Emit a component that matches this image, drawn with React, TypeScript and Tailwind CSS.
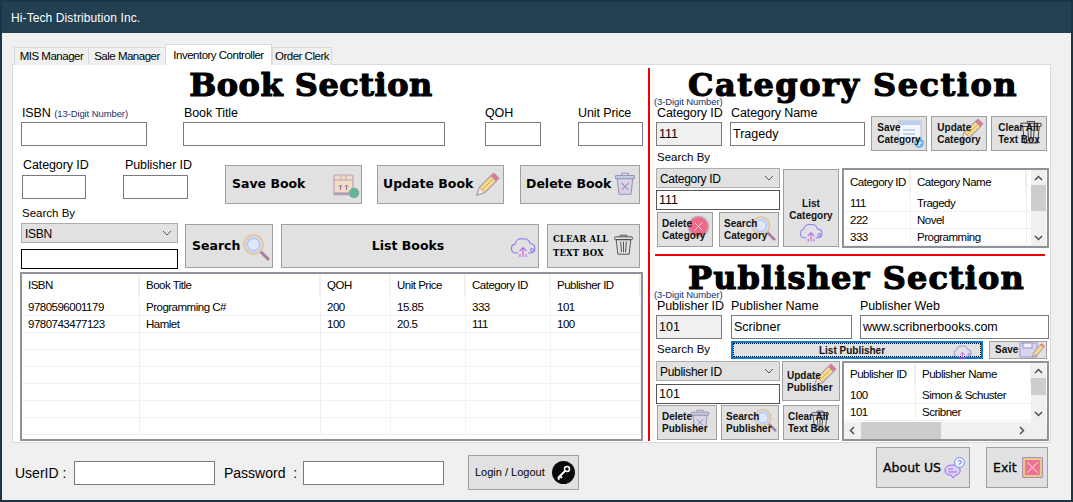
import type { ReactNode } from "react";

const heading =
  "font-['DejaVu_Serif',serif] font-bold text-black [-webkit-text-stroke:1.2px_black] leading-[20px] whitespace-nowrap text-[32px]";
const bigBtn = "font-['DejaVu_Sans',sans-serif] font-bold text-[12.5px] text-black";
const smallBtn = "font-['Liberation_Sans',sans-serif] font-bold text-[10px] leading-[12px] text-[#111] whitespace-nowrap";
const plainBtn = "font-['DejaVu_Sans',sans-serif] text-[12.5px] pt-[1px] text-black [-webkit-text-stroke:0.3px_black]";

function Btn({
  className,
  textClass,
  icon,
  children,
}: {
  className: string;
  textClass?: string;
  icon?: ReactNode;
  children: ReactNode;
}) {
  return (
    <div className={`relative box-border shrink-0 flex items-center bg-[#e1e1e1] border border-[#a0a0a0] ${className}`}>
      {icon}
      <span className={`relative z-10 ${textClass ?? bigBtn}`}>{children}</span>
    </div>
  );
}

function Input({ value, className }: { value?: string; className: string }) {
  return (
    <div className={`box-border flex items-center px-[2px] text-[12.5px] text-black border ${className}`}>
      {value}
    </div>
  );
}

function Combo({ value, className }: { value: string; className: string }) {
  return (
    <div className={`box-border h-[20px] flex items-center justify-between pl-[3px] pr-[5px] bg-[#e1e1e1] border border-[#adadad] text-[12px] tracking-[-0.3px] text-black ${className}`}>
      <span className="pt-[1px]">{value}</span>
      <svg width="10" height="6" viewBox="0 0 10 6" fill="none" stroke="#555" strokeWidth="1">
        <path d="M1 1l4 4 4-4" />
      </svg>
    </div>
  );
}

function Hint() {
  return <div className="h-[9px] leading-[10px] -ml-[2px] text-[9.5px] tracking-[-0.1px] text-[#1b2f6b] whitespace-nowrap">(3-Digit Number)</div>;
}

function Label({ children, className }: { children: ReactNode; className?: string }) {
  return <div className={`h-[15px] leading-[15px] text-[12.5px] tracking-[-0.1px] text-black whitespace-nowrap ${className ?? ""}`}>{children}</div>;
}

function Field({
  label,
  className,
  value,
  labelClass,
}: {
  label: ReactNode;
  className: string;
  value?: string;
  labelClass?: string;
}) {
  return (
    <div className={`flex flex-col shrink-0 ${className}`}>
      <Label className={labelClass}>{label}</Label>
      <Input value={value} className="w-full h-[24px] bg-white border-[#7a7a7a]" />
    </div>
  );
}

/* icons */
function BoxIcon() {
  return (
    <svg className="absolute right-[1px] top-[8px]" width="29" height="27" viewBox="0 0 29 27" fill="none">
      <path d="M3 3q0-2 2-2h15q2 0 2 2v18H3z" fill="#f2dcc4" stroke="#b9a3c4" strokeWidth="1.200" />
      <path d="M3 6h19M10 1v5M15 1v5" stroke="#b9a3c4" />
      <path d="M3.500 19.500h18" stroke="#a793b0" strokeWidth="2" />
      <path d="M9.500 16v-5M8 12.500L9.500 11l1.500 1.500M15.500 16v-5M14 12.500l1.500-1.500 1.500 1.500" stroke="#8a7094" />
      <circle cx="23" cy="19" r="5" fill="#5fb79a" stroke="#8fa8a8" strokeWidth="0.600" />
    </svg>
  );
}

function Pencil({ className, size = 25 }: { className: string; size?: number }) {
  return (
    <svg className={`absolute ${className}`} width={size} height={size} viewBox="0 0 28 28" fill="none">
      <path d="M2 26l3-9L18 4l6 6-13 13z" fill="#f5d98a" stroke="#a793b0" strokeWidth="1.200" />
      <path d="M2 26l3-9 6 6z" fill="#f7e7cf" stroke="#a793b0" />
      <path d="M18 4l3-3 6 6-3 3z" fill="#e8768a" stroke="#a793b0" />
      <path d="M8 20L20 8" stroke="#d9a34f" />
    </svg>
  );
}

function TrashX({ className, size = 24 }: { className: string; size?: number }) {
  return (
    <svg className={`absolute ${className}`} width={size} height={size} viewBox="0 0 28 28" fill="none" stroke="#a08fb5" strokeWidth="1.200">
      <path d="M10 4V1.500h8V4" />
      <rect x="3" y="4" width="22" height="4" rx="1" fill="#bcd0e4" />
      <path d="M5 8l2 18h14l2-18z" fill="#d8d4e6" />
      <path d="M10 13l8 8M18 13l-8 8" stroke="#8b8fb8" />
    </svg>
  );
}

function TrashPlain({ className, size = 21 }: { className: string; size?: number }) {
  return (
    <svg className={`absolute ${className}`} width={size} height={size} viewBox="0 0 26 26" fill="none" stroke="#444" strokeWidth="1.100">
      <path d="M9 3V1.500h8V3" />
      <rect x="2" y="3.500" width="22" height="3.500" rx="1" />
      <path d="M4 7l2 18h14l2-18zM9.500 9.500l1 13M13 9.500v13M16.500 9.500l-1 13" />
    </svg>
  );
}

function Cloud({ className, size = 26 }: { className: string; size?: number }) {
  return (
    <svg className={`absolute ${className}`} width={size} height={size * 0.85} viewBox="0 0 26 22" fill="none" stroke="#9a6cf0" strokeWidth="1.100">
      <path d="M8 17H6a4.500 4.500 0 0 1-1-8.900A6 6 0 0 1 13 3a5.500 5.500 0 0 1 7 4.500 4.800 4.800 0 0 1 1 9.500h-3" stroke="#8f7cf5" />
      <path d="M13 21v-9M9.500 15l3.500-3.500 3.500 3.500" stroke="#c05cf0" />
      <path d="M10 21v-3M16 21v-3" stroke="#c05cf0" />
      <circle cx="22" cy="14" r="1.500" stroke="#8f7cf5" />
    </svg>
  );
}

function Magnifier({ className, size = 28 }: { className: string; size?: number }) {
  return (
    <svg className={`absolute ${className}`} width={size} height={size} viewBox="0 0 28 28" fill="none">
      <path d="M17 17l9 9" stroke="#a77f9d" strokeWidth="3" strokeLinecap="round" />
      <circle cx="11.500" cy="11.500" r="9.500" fill="#c9dcf7" stroke="#e6c79a" strokeWidth="2" />
      <circle cx="11.500" cy="11.500" r="6" fill="#dfe8fb" stroke="#a9b8ea" />
    </svg>
  );
}

function RedCircle() {
  return (
    <svg className="absolute left-[29px] top-[2px]" width="23" height="23" viewBox="0 0 23 23" fill="none">
      <circle cx="11.500" cy="11.500" r="10" fill="#ec6b86" stroke="#caa7b8" strokeWidth="1.500" />
      <path d="M7.500 7.500l8 8M15.500 7.500l-8 8" stroke="#f8d0d8" />
    </svg>
  );
}

function NoteIcon() {
  return (
    <svg className="absolute left-[26px] top-[3px]" width="27" height="30" viewBox="0 0 27 30" fill="none">
      <rect x="1" y="1" width="22" height="23" fill="#f4f6fb" stroke="#b9c4dc" />
      <rect x="1" y="1" width="22" height="4" fill="#bcd3f0" />
      <path d="M5 10h12M5 14h12M5 18h8" stroke="#8fb0e0" />
      <circle cx="21" cy="23" r="5" fill="#6fb4ea" />
      <path d="M21 20v6M18 23h6" stroke="#fff" />
    </svg>
  );
}

function FloppyIcon() {
  return (
    <svg className="absolute right-[1px] top-[0px]" width="26" height="16" viewBox="0 0 26 16" fill="none">
      <rect x="1" y="1" width="17" height="14" fill="#d6d3ee" stroke="#9f97c9" />
      <rect x="4" y="1" width="9" height="5" fill="#eef" stroke="#9f97c9" />
      <path d="M13 15l2-5 7-8 3 3-7 8z" fill="#f5d98a" stroke="#a793b0" />
      <path d="M22 2l3 3" stroke="#e8768a" strokeWidth="2" />
    </svg>
  );
}

function KeyIcon() {
  return (
    <svg className="absolute right-[3px] top-[5px]" width="23" height="23" viewBox="0 0 23 23" fill="none">
      <circle cx="11.500" cy="11.500" r="11.500" fill="#0a0a0a" />
      <circle cx="15" cy="8" r="2.500" stroke="#fff" strokeWidth="1.600" />
      <path d="M13 10l-7 7M8 15l2 2M6 17l1.500 1.500" stroke="#fff" strokeWidth="1.800" />
    </svg>
  );
}

function ChatIcon() {
  return (
    <svg className="absolute right-[4px] top-[9px]" width="22" height="22" viewBox="0 0 22 22" fill="none">
      <path d="M2 14q0-6 7-6t8 4q1 5-4 6l-3 3-2-3q-6 0-6-4z" fill="#ddd0fb" stroke="#a06cf0" />
      <path d="M5 12h5M5 15h9" stroke="#a06cf0" />
      <circle cx="16.500" cy="5.500" r="5" fill="#eaf2fd" stroke="#6f8fe8" />
      <path d="M15 4.200q1.500-1.700 3 0t-1.500 2.500v.8" stroke="#4a62c8" strokeWidth="0.800" />
    </svg>
  );
}

function ExitIcon() {
  return (
    <svg className="absolute right-[4px] top-[9px]" width="21" height="21" viewBox="0 0 20 20" fill="none">
      <rect x="0.500" y="0.500" width="19" height="19" rx="1" fill="#e9c88f" stroke="#a793b0" />
      <rect x="3" y="3" width="14" height="14" fill="#ee6f8e" />
      <path d="M5 5l10 10M15 5L5 15" stroke="#fbd9df" />
    </svg>
  );
}

/* data grids */
function Grid({
  className,
  cols,
  headers,
  rows,
  lines,
  headerH,
  rowH,
  side,
  bottom,
}: {
  className: string;
  cols: string;
  headers: string[];
  rows: string[][];
  lines: number;
  headerH: string;
  rowH: string;
  side?: ReactNode;
  bottom?: ReactNode;
}) {
  const blanks = Array.from({ length: lines - rows.length }, () => headers.map(() => ""));
  const cell = "flex items-center pl-[6px] text-[11.5px] tracking-[-0.5px] text-black whitespace-nowrap overflow-hidden";
  return (
    <div className={`box-border shrink-0 border-2 border-[#8f9399] bg-white overflow-hidden flex flex-col ${className}`}>
      <div className="flex flex-1 min-h-0">
        <div className="flex-1 min-w-0 overflow-hidden">
          <div className={`grid ${cols} ${headerH}`}>
            {headers.map((h) => (
              <div key={h} className={`${cell} border-r-2 border-[#f0f0f0]`}>
                {h}
              </div>
            ))}
          </div>
          {[...rows, ...blanks].map((row, i) => (
            <div key={i} className={`grid ${cols} ${rowH} border-b border-[#f0f0f0]`}>
              {row.map((c, j) => (
                <div key={j} className={`${cell} pt-[2px] border-r border-[#f0f0f0]`}>
                  {c}
                </div>
              ))}
            </div>
          ))}
        </div>
        {side}
      </div>
      {bottom}
    </div>
  );
}

function VScroll({ thumb }: { thumb: string }) {
  return (
    <div className="w-[15px] mr-[1px] shrink-0 bg-[#f0f0f0] flex flex-col items-center">
      <svg className="mt-[5px] mb-[4px]" width="9" height="6" viewBox="0 0 9 6" fill="none" stroke="#505050" strokeWidth="1.500">
        <path d="M1 5l3.500-3.500L8 5" />
      </svg>
      <div className={`w-full bg-[#cdcdcd] ${thumb}`} />
      <svg className="mt-auto mb-[5px]" width="9" height="6" viewBox="0 0 9 6" fill="none" stroke="#505050" strokeWidth="1.500">
        <path d="M1 1l3.500 3.500L8 1" />
      </svg>
    </div>
  );
}

function HScroll() {
  return (
    <div className="h-[17px] shrink-0 bg-[#f0f0f0] flex items-center pl-[5px] pr-[22px]">
      <svg width="6" height="9" viewBox="0 0 6 9" fill="none" stroke="#505050" strokeWidth="1.500">
        <path d="M5 1L1.500 4.500 5 8" />
      </svg>
      <div className="ml-[6px] w-[80px] h-full bg-[#cdcdcd]" />
      <svg className="ml-auto" width="6" height="9" viewBox="0 0 6 9" fill="none" stroke="#505050" strokeWidth="1.500">
        <path d="M1 1l3.500 3.500L1 8" />
      </svg>
    </div>
  );
}

function Tabs() {
  const tab =
    "box-border h-[18px] flex items-center justify-center border border-b-0 border-[#d9d9d9] bg-[#f0f0f0] text-[11.5px] tracking-[-0.5px] text-black whitespace-nowrap";
  return (
    <div className="flex items-end h-[21px] ml-[12px] mt-[11px] relative z-10 -mb-[1px]">
      <div className={`${tab} w-[75px]`}>MIS Manager</div>
      <div className={`${tab} w-[78px] -ml-[1px]`}>Sale Manager</div>
      <div className="box-border h-[21px] w-[107px] -ml-[1px] flex items-start justify-center pt-[2px] border border-b-0 border-[#d9d9d9] bg-white text-[11.5px] tracking-[-0.5px] text-black whitespace-nowrap">
        Inventory Controller
      </div>
      <div className={`${tab} w-[60px]`}>Order Clerk</div>
    </div>
  );
}

function BookSection() {
  return (
    <div className="w-[635px] shrink-0">
      <div className={`${heading} h-[35px] pt-[10px] text-center pr-[39px] tracking-[0.5px]`}>Book Section</div>
      <div className="flex items-end h-[46px] pl-[8px]">
        <Field
          className="w-[126px]"
          labelClass="pl-[1px] mb-[1px]"
          label={
            <>
              ISBN <span className="text-[9.5px] text-[#1b2f6b]">(13-Digit Number)</span>
            </>
          }
        />
        <Field className="w-[262px] ml-[36px]" labelClass="pl-[1px] mb-[1px]" label="Book Title" />
        <Field className="w-[56px] ml-[40px]" labelClass="mb-[1px]" label="QOH" />
        <Field className="w-[65px] ml-[37px]" labelClass="mb-[1px]" label="Unit Price" />
      </div>
      <div className="flex h-[58px] pl-[9px]">
        <Field className="w-[64px] mt-[12px]" labelClass="pl-[1px] mb-[2px]" label="Category ID" />
        <Field className="w-[65px] ml-[37px] mt-[12px]" labelClass="pl-[2px] mb-[2px]" label="Publisher ID" />
        <Btn className="w-[137px] h-[39px] ml-[37px] mt-[19px] pl-[6px]" icon={<BoxIcon />}>
          Save Book
        </Btn>
        <Btn className="w-[127px] h-[39px] ml-[15px] mt-[19px] pl-[5px]" icon={<Pencil className="right-[3px] top-[6px]" />}>
          Update Book
        </Btn>
        <Btn className="w-[120px] h-[39px] ml-[16px] mt-[19px] pl-[5px]" icon={<TrashX className="right-[2px] top-[6px]" />}>
          Delete Book
        </Btn>
      </div>
      <div className="flex h-[68px] pl-[8px]">
        <div className="w-[157px] shrink-0 pt-[2px]">
          <div className="h-[17px] leading-[14px] text-[11.5px] text-black pl-[1px]">Search By</div>
          <Combo value="ISBN" className="w-full" />
          <Input className="w-full h-[20px] mt-[6px] bg-white border-black" />
        </div>
        <Btn className="w-[88px] h-[44px] ml-[7px] mt-[20px] pl-[6px]" icon={<Magnifier className="right-[2px] top-[8px]" />}>
          Search
        </Btn>
        <Btn className="w-[258px] h-[44px] ml-[8px] mt-[20px] justify-center pr-[4px]" icon={<Cloud className="right-[2px] top-[11px]" />}>
          List Books
        </Btn>
        <Btn
          className="w-[93px] h-[44px] ml-[8px] mt-[20px] pl-[5px]"
          textClass="font-['DejaVu_Serif',serif] font-bold text-[8.5px] leading-[14px] tracking-[0.1px] text-black whitespace-nowrap"
          icon={<TrashPlain className="right-[5px] top-[9px]" />}
        >
          CLEAR ALL
          <br />
          TEXT BOX
        </Btn>
      </div>
      <Grid
        className="w-[623px] h-[169px] ml-[7px]"
        cols="grid-cols-[118px_181px_70px_75px_85px_90px]"
        headers={["ISBN", "Book Title", "QOH", "Unit Price", "Category ID", "Publisher ID"]}
        rows={[
          ["9780596001179", "Programming C#", "200", "15.85", "333", "101"],
          ["9780743477123", "Hamlet", "100", "20.5", "111", "100"],
        ]}
        lines={8}
        headerH="h-[25px] pb-[2px]"
        rowH="h-[17px]"
      />
    </div>
  );
}

function CategorySection() {
  return (
    <>
      <div className={`${heading} h-[32px] pt-[10px] text-center pl-[6px] tracking-[1.5px]`}>Category Section</div>
      <div className="flex h-[54px] pl-[6px]">
        <div className="w-[66px] shrink-0">
          <Hint />
          <Label className="pl-[1px] mb-[1px]">Category ID</Label>
          <Input value="111" className="w-full h-[24px] bg-[#f0f0f0] border-[#7a7a7a]" />
        </div>
        <Field className="w-[135px] ml-[8px] mt-[9px]" labelClass="pl-[1px] mb-[1px]" label="Category Name" value="Tragedy" />
        <Btn className="w-[56px] h-[35px] ml-[6px] mt-[19px] justify-center" textClass={smallBtn} icon={<NoteIcon />}>
          Save
          <br />
          Category
        </Btn>
        <Btn className="w-[56px] h-[35px] ml-[4px] mt-[19px] justify-center" textClass={smallBtn} icon={<Pencil size={24} className="right-[2px] top-[1px]" />}>
          Update
          <br />
          Category
        </Btn>
        <Btn className="w-[56px] h-[35px] ml-[4px] mt-[19px] justify-center" textClass={smallBtn} icon={<TrashPlain size={24} className="right-[3px] top-[3px]" />}>
          Clear All
          <br />
          Text Box
        </Btn>
      </div>
      <div className="flex h-[97px] pl-[6px]">
        <div className="w-[124px] shrink-0">
          <div className="h-[17px] leading-[13px] text-[11.5px] text-black pl-[1px]">Search By</div>
          <Combo value="Category ID" className="w-full" />
          <Input value="111" className="w-full h-[20px] mt-[2px] bg-white border-[#555]" />
          <div className="flex mt-[2px] ml-[1px]">
            <Btn className="w-[56px] h-[35px] pl-[4px]" textClass={smallBtn} icon={<RedCircle />}>
              Delete
              <br />
              Category
            </Btn>
            <Btn className="w-[60px] h-[35px] ml-[6px] pl-[4px]" textClass={smallBtn} icon={<Magnifier size={26} className="right-[2px] top-[2px]" />}>
              Search
              <br />
              Category
            </Btn>
          </div>
        </div>
        <Btn
          className="w-[56px] h-[78px] ml-[3px] mt-[18px] flex-col pt-[28px]"
          textClass={`${smallBtn} text-center`}
          icon={<Cloud size={24} className="left-[15px] top-[52px]" />}
        >
          List
          <br />
          Category
        </Btn>
        <Grid
          className="w-[207px] h-[80px] ml-[3px] mt-[17px]"
          cols="grid-cols-[67px_116px]"
          headers={["Category ID", "Category Name"]}
          rows={[
            ["111", "Tragedy"],
            ["222", "Novel"],
            ["333", "Programming"],
          ]}
          lines={3}
          headerH="h-[25px]"
          rowH="h-[17px]"
          side={<VScroll thumb="h-[26px]" />}
        />
      </div>
    </>
  );
}

function PublisherSection() {
  return (
    <>
      <div className={`${heading} h-[34px] pt-[12px] text-center pl-[13px] tracking-[1.1px]`}>Publisher Section</div>
      <div className="flex h-[49px] pl-[6px]">
        <div className="w-[66px] shrink-0">
          <Hint />
          <Label className="pl-[1px] mb-[1px]">Publisher ID</Label>
          <Input value="101" className="w-full h-[24px] bg-[#f0f0f0] border-[#7a7a7a]" />
        </div>
        <Field className="w-[121px] ml-[9px] mt-[9px]" labelClass="mb-[1px]" label="Publisher Name" value="Scribner" />
        <Field className="w-[189px] ml-[8px] mt-[9px]" labelClass="mb-[1px]" label="Publisher Web" value="www.scribnerbooks.com" />
      </div>
      <div className="flex items-center h-[22px] pl-[6px]">
        <div className="w-[75px] shrink-0 text-[11.5px] pl-[1px] text-black">Search By</div>
        <div className="box-border w-[252px] h-[18px] border-2 border-[#0078d7] shrink-0">
          <div className="relative h-full flex items-center justify-center bg-[#e1e1e1] border border-dotted border-black pr-[10px]">
            <Cloud size={19} className="right-[8px] top-[0px]" />
            <span className={`relative z-10 pt-[1px] ${smallBtn}`}>List Publisher</span>
          </div>
        </div>
        <Btn className="w-[58px] h-[18px] ml-[6px] pl-[5px]" textClass={smallBtn} icon={<FloppyIcon />}>
          Save
        </Btn>
      </div>
      <div className="flex pl-[6px]">
        <div className="w-[186px] shrink-0">
          <div className="flex h-[44px]">
            <div className="w-[124px] shrink-0">
              <Combo value="Publisher ID" className="w-full" />
              <Input value="101" className="w-full h-[20px] mt-[3px] bg-white border-[#555]" />
            </div>
            <Btn className="w-[58px] h-[40px] ml-[2px] pl-[4px] pt-[2px]" textClass={smallBtn} icon={<Pencil size={24} className="right-[2px] top-[1px]" />}>
              Update
              <br />
              Publisher
            </Btn>
          </div>
          <div className="flex ml-[1px]">
            <Btn className="w-[60px] h-[35px] pl-[4px]" textClass={smallBtn} icon={<TrashX size={22} className="right-[5px] top-[3px]" />}>
              Delete
              <br />
              Publisher
            </Btn>
            <Btn className="w-[58px] h-[35px] ml-[4px] pl-[4px]" textClass={smallBtn} icon={<Magnifier size={24} className="right-[1px] top-[2px]" />}>
              Search
              <br />
              Publisher
            </Btn>
            <Btn className="w-[56px] h-[35px] ml-[4px] pl-[4px]" textClass={smallBtn} icon={<TrashPlain size={20} className="right-[8px] top-[4px]" />}>
              Clear All
              <br />
              Text Box
            </Btn>
          </div>
        </div>
        <Grid
          className="w-[207px] h-[80px]"
          cols="grid-cols-[72px_116px]"
          headers={["Publisher ID", "Publisher Name"]}
          rows={[
            ["100", "Simon & Schuster"],
            ["101", "Scribner"],
          ]}
          lines={2}
          headerH="h-[24px] pb-[1px]"
          rowH="h-[17px]"
          side={<VScroll thumb="h-[17px]" />}
          bottom={<HScroll />}
        />
      </div>
    </>
  );
}

export default function App() {
  return (
    <div className="box-border w-[1073px] h-[502px] overflow-hidden flex flex-col bg-[#f0f0f0] border-2 border-[#1d3445] font-['Liberation_Sans',sans-serif]">
      <div className="h-[31px] shrink-0 flex items-center pl-[9px] bg-[#233f52] text-[12px] tracking-[0.1px] text-white">Hi-Tech Distribution Inc.</div>
      <Tabs />
      <div className="box-border w-[1039px] h-[379px] ml-[10px] flex border border-[#d9d9d9] bg-white">
        <BookSection />
        <div className="w-[2px] h-[373px] mt-[3px] shrink-0 bg-[#f00000]" />
        <div className="w-[400px] shrink-0">
          <CategorySection />
          <div className="w-[390px] h-[2px] mt-[6px] ml-[5px] bg-[#f00000]" />
          <PublisherSection />
        </div>
      </div>
      <div className="flex flex-1 pl-[13px]">
        <div className="flex items-center self-start mt-[18px]">
          <div className="w-[59px] text-[14px] text-black">UserID :</div>
          <Input className="w-[141px] h-[24px] bg-white border-[#7a7a7a]" />
          <div className="w-[79px] ml-[9px] text-[14px] text-black whitespace-pre">Password  :</div>
          <Input className="w-[141px] h-[24px] bg-white border-[#7a7a7a]" />
        </div>
        <Btn className="w-[111px] h-[35px] ml-[24px] mt-[12px] pl-[6px]" textClass="text-[11px] text-black whitespace-nowrap" icon={<KeyIcon />}>
          Login / Logout
        </Btn>
        <Btn className="w-[94px] h-[41px] ml-[297px] mt-[4px] pl-[6px]" textClass={plainBtn} icon={<ChatIcon />}>
          About US
        </Btn>
        <Btn className="w-[62px] h-[41px] ml-[16px] mt-[4px] pl-[6px]" textClass={plainBtn} icon={<ExitIcon />}>
          Exit
        </Btn>
      </div>
    </div>
  );
}
